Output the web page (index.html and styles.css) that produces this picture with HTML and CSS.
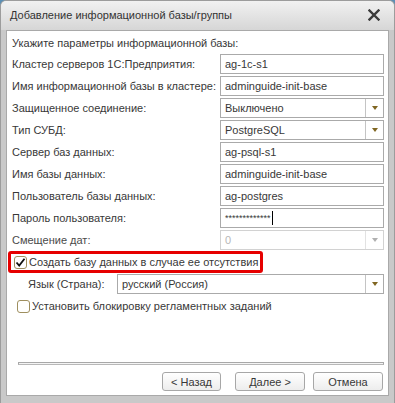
FILE: index.html
```html
<!DOCTYPE html>
<html lang="ru">
<head>
    <title>Добавление информационной базы/группы</title>
    <meta charset="UTF-8">
    <link rel="stylesheet" href="styles.css">
</head>
<body>
    <div class="window">
        <div class="title-bar">
            <span class="title">Добавление информационной базы/группы</span>
            <svg class="close" width="12" height="12" viewBox="0 0 12 12">
                <path d="M1.5 1.5 L10.5 10.5 M10.5 1.5 L1.5 10.5" stroke="#3a3a3a" stroke-width="2.4" stroke-linecap="square"/>
            </svg>
        </div>
        <div class="content">
            <div class="hint">Укажите параметры информационной базы:</div>
            <div class="form">
                <label>Кластер серверов 1С:Предприятия:</label>
                <div class="field">ag-1c-s1</div>

                <label>Имя информационной базы в кластере:</label>
                <div class="field">adminguide-init-base</div>

                <label>Защищенное соединение:</label>
                <div class="field select"><span class="value">Выключено</span><span class="drop"><i class="arrow"></i></span></div>

                <label>Тип СУБД:</label>
                <div class="field select"><span class="value">PostgreSQL</span><span class="drop"><i class="arrow"></i></span></div>

                <label>Сервер баз данных:</label>
                <div class="field">ag-psql-s1</div>

                <label>Имя базы данных:</label>
                <div class="field">adminguide-init-base</div>

                <label>Пользователь базы данных:</label>
                <div class="field">ag-postgres</div>

                <label>Пароль пользователя:</label>
                <div class="field password">*************<span class="caret"></span></div>

                <label class="disabled-label">Смещение дат:</label>
                <div class="field select disabled"><span class="value">0</span><span class="drop"><i class="arrow"></i></span></div>
            </div>

            <div class="check-row highlighted">
                <span class="checkbox checked">
                    <svg width="11" height="11" viewBox="0 0 11 11"><path d="M1.5 5.5 L4.2 8.5 L9.5 1.8" fill="none" stroke="#111" stroke-width="1.8"/></svg>
                </span>
                <span>Создать базу данных в случае ее отсутствия</span>
            </div>

            <div class="lang-row">
                <label>Язык (Страна):</label>
                <div class="field select wide"><span class="value">русский (Россия)</span><span class="drop"><i class="arrow"></i></span></div>
            </div>

            <div class="check-row">
                <span class="checkbox"></span>
                <span>Установить блокировку регламентных заданий</span>
            </div>

            <div class="spacer"></div>
            <div class="separator"></div>

            <div class="buttons">
                <button>&lt; Назад</button>
                <button>Далее &gt;</button>
                <button class="cancel">Отмена</button>
            </div>
        </div>
    </div>
</body>
</html>
```

FILE: styles.css
```css
html, body {
    margin: 0;
    padding: 0;
}
body {
    width: 395px;
    height: 403px;
    background-color: #5b8fb5;
    font-family: Arial, "Liberation Sans", sans-serif;
    font-size: 11px;
    color: #383838;
    overflow: hidden;
}
.window {
    height: 403px;
    box-sizing: border-box;
    border-radius: 6px 6px 0 0;
    border: 1px solid #9c9c9c;
    border-bottom: none;
    background: #c9c9c9;
    display: flex;
    flex-direction: column;
}
.title-bar {
    height: 29px;
    flex: none;
    display: flex;
    align-items: center;
    justify-content: space-between;
    padding: 0 9px 2px 9px;
    box-sizing: border-box;
    border-radius: 5px 5px 0 0;
    background: linear-gradient(#f1f1f1, #d6d6d6);
    color: #333;
    font-size: 11px;
}
.close {
    margin-right: 5px;
}
.content {
    flex: 1;
    margin: 0 5px 7px 5px;
    background: #fff;
    border: 1px solid #a9a9a9;
    display: flex;
    flex-direction: column;
    padding: 0 3px 4px 5px;
}
.hint {
    height: 22px;
    line-height: 22px;
    margin-top: 1px;
}
.form {
    display: grid;
    grid-template-columns: 208px 164px;
    grid-auto-rows: 20px;
    row-gap: 2px;
}
.form label {
    line-height: 20px;
    white-space: nowrap;
}
.field {
    box-sizing: border-box;
    height: 20px;
    border: 1px solid #aaaaaa;
    padding-left: 4px;
    line-height: 18px;
    color: #383838;
    white-space: nowrap;
    overflow: hidden;
    display: flex;
}
.select {
    padding-left: 0;
}
.select .value {
    flex: 1;
    padding-left: 4px;
}
.drop {
    width: 17px;
    border-left: 1px solid #c4c4c4;
    display: flex;
    align-items: center;
    justify-content: center;
}
.arrow {
    width: 0;
    height: 0;
    border-left: 3px solid transparent;
    border-right: 3px solid transparent;
    border-top: 4px solid #806622;
}
.disabled {
    border-color: #d2d2d2;
    color: #b8b8b8;
}
.disabled .drop {
    border-left-color: #e2e2e2;
}
.disabled .arrow {
    border-top-color: #b0b0b0;
}
.disabled-label {
    color: #4a4a4a;
}
.password {
    font-size: 9px;
    align-items: center;
}
.caret {
    width: 1px;
    height: 14px;
    background: #000;
    margin-left: 1px;
}
.check-row {
    display: flex;
    align-items: center;
    gap: 2px;
    height: 20px;
    margin-top: 2px;
    width: fit-content;
    padding: 0 3px 0 5px;
    box-sizing: border-box;
}
.highlighted {
    border: 3px solid #e60000;
    border-radius: 3px;
    height: 22px;
    margin: 1px 0 0 -4px;
    padding: 0 2px 0 3px;
}
.checkbox {
    width: 13px;
    height: 13px;
    box-sizing: border-box;
    border: 1px solid #9f8f5f;
    border-radius: 3px;
    background: #fff;
    display: flex;
    align-items: center;
    justify-content: center;
}
.lang-row {
    display: flex;
    align-items: center;
    margin-top: 1px;
    padding-left: 16px;
    height: 20px;
}
.lang-row label {
    width: 89px;
}
.wide {
    width: 267px;
}
.spacer {
    flex: 1;
}
.separator {
    height: 1px;
    border-top: 1px solid #a8a8a8;
    border-bottom: 1px solid #b8b8b8;
    background: #f4f4f4;
    border-left: 1px solid #a8a8a8;
    border-right: 1px solid #a8a8a8;
    margin: 0 1px 7px 6px;
}
.buttons {
    display: flex;
    justify-content: flex-end;
    padding-right: 2px;
}
button {
    height: 19px;
    padding: 0;
    font-family: Arial, "Liberation Sans", sans-serif;
    font-size: 11px;
    color: #383838;
    background: linear-gradient(#ffffff, #ededed);
    border: 1px solid #a7a7a7;
    border-radius: 3px;
    width: 59px;
    margin-left: 14px;
}
button + button {
    width: 70px;
}
.cancel {
    margin-left: 8px;
}
```
